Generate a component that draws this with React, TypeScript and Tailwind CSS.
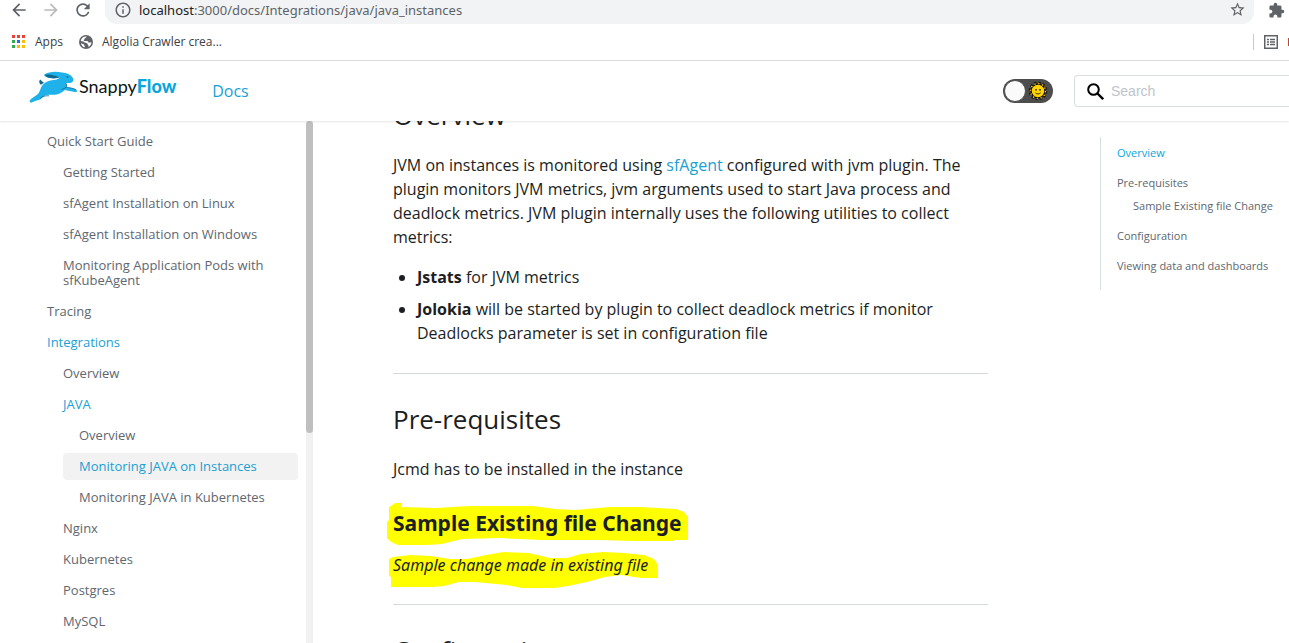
import React from "react";

type DocLink = { label: string; level: 0 | 1 | 2; state?: "open" | "current" };

const sidebarLinks: DocLink[] = [
  { label: "Quick Start Guide", level: 0 },
  { label: "Getting Started", level: 1 },
  { label: "sfAgent Installation on Linux", level: 1 },
  { label: "sfAgent Installation on Windows", level: 1 },
  { label: "Monitoring Application Pods with sfKubeAgent", level: 1 },
  { label: "Tracing", level: 0 },
  { label: "Integrations", level: 0, state: "open" },
  { label: "Overview", level: 1 },
  { label: "JAVA", level: 1, state: "open" },
  { label: "Overview", level: 2 },
  { label: "Monitoring JAVA on Instances", level: 2, state: "current" },
  { label: "Monitoring JAVA in Kubernetes", level: 2 },
  { label: "Nginx", level: 1 },
  { label: "Kubernetes", level: 1 },
  { label: "Postgres", level: 1 },
  { label: "MySQL", level: 1 },
];

function BackIcon() {
  return (
    <svg width="20" height="20" viewBox="0 0 24 24" fill="currentColor" aria-hidden="true">
      <path d="M20 11H7.83l5.59-5.59L12 4l-8 8 8 8 1.41-1.41L7.83 13H20v-2z" />
    </svg>
  );
}

function ForwardIcon() {
  return (
    <svg width="20" height="20" viewBox="0 0 24 24" fill="currentColor" aria-hidden="true">
      <path d="M12 4l-1.41 1.41L16.17 11H4v2h12.17l-5.58 5.59L12 20l8-8z" />
    </svg>
  );
}

function ReloadIcon() {
  return (
    <svg width="20" height="20" viewBox="0 0 24 24" fill="currentColor" aria-hidden="true">
      <path d="M17.65 6.35A7.958 7.958 0 0 0 12 4c-4.42 0-7.99 3.58-7.99 8s3.57 8 7.99 8c3.73 0 6.84-2.55 7.73-6h-2.08A5.99 5.99 0 0 1 12 18c-3.31 0-6-2.69-6-6s2.69-6 6-6c1.66 0 3.14.69 4.22 1.78L13 11h7V4l-2.35 2.35z" />
    </svg>
  );
}

function InfoIcon() {
  return (
    <svg width="18" height="18" viewBox="0 0 24 24" fill="currentColor" aria-hidden="true">
      <path d="M11 7h2v2h-2zm0 4h2v6h-2zm1-9C6.48 2 2 6.48 2 12s4.48 10 10 10 10-4.48 10-10S17.52 2 12 2zm0 18c-4.41 0-8-3.59-8-8s3.59-8 8-8 8 3.59 8 8-3.59 8-8 8z" />
    </svg>
  );
}

function StarIcon() {
  return (
    <svg width="17" height="17" viewBox="0 0 24 24" fill="currentColor" aria-hidden="true">
      <path d="M22 9.24l-7.19-.62L12 2 9.19 8.63 2 9.24l5.46 4.73L5.82 21 12 17.27 18.18 21l-1.63-7.03L22 9.24zM12 15.4l-3.76 2.27 1-4.28-3.32-2.88 4.38-.38L12 6.1l1.71 4.04 4.38.38-3.32 2.88 1 4.28L12 15.4z" />
    </svg>
  );
}

function PuzzleIcon() {
  return (
    <svg width="17" height="17" viewBox="0 0 24 24" fill="currentColor" aria-hidden="true">
      <path d="M20.5 11H19V7c0-1.1-.9-2-2-2h-4V3.5a2.5 2.5 0 0 0-5 0V5H4c-1.1 0-1.99.9-1.99 2v3.8H3.5c1.49 0 2.7 1.21 2.7 2.7s-1.21 2.7-2.7 2.7H2V20c0 1.1.9 2 2 2h3.8v-1.5c0-1.49 1.21-2.7 2.7-2.7s2.7 1.21 2.7 2.7V22H17c1.1 0 2-.9 2-2v-4h1.5a2.5 2.5 0 0 0 0-5z" />
    </svg>
  );
}

function AppsIcon() {
  const colors = ["#ea4335", "#ea4335", "#ea4335", "#34a853", "#1a73e8", "#fbbc04", "#34a853", "#fbbc04", "#fbbc04"];
  return (
    <svg width="14" height="14" viewBox="0 0 14 14" aria-hidden="true" shapeRendering="crispEdges">
      {colors.map((c, i) => (
        <rect key={i} x={(i % 3) * 5} y={Math.floor(i / 3) * 5} width="3" height="3" fill={c} />
      ))}
    </svg>
  );
}

function GlobeIcon() {
  return (
    <svg width="14" height="14" viewBox="0 0 14 14" aria-hidden="true">
      <circle cx="7" cy="7" r="7" fill="#5f6368" />
      <path d="M8 1.6c-1 .2-.6 1.1-1.7 1.5-.9.3-.5 1.3-1.3 1.6-.7.3-.1 1.3.8 1.3h2.4c.9 0 .6 1.2 1.4 1.4 1 .3 1.7-.2 2.8-.2 0 2-1.2 4-3 4.8.2-.9.4-1.6-.3-2.1-.7-.5-.3-1.3-1.2-1.7-.8-.3-2.3.1-2.5-.9C5.2 6.6 3.5 6.5 1.7 6 2.2 3.5 4.3 1.2 8 1.6zM2 8.2c1 .1 1.7.9 2.5 1.1.8.2.5 1 1 1.5.4.4.5 1 .4 1.5C4 12 2.200 10.300 2 8.200z" fill="#fff" />
    </svg>
  );
}

function ReadingListIcon() {
  return (
    <svg width="14" height="14" viewBox="0 0 14 14" fill="none" stroke="#5f6368" aria-hidden="true">
      <rect x=".75" y=".75" width="12.5" height="12.5" strokeWidth="1.5" />
      <path d="M3 4.5h2M6 4.5h5M3 7h2M6 7h5M3 9.5h2M6 9.5h5" strokeWidth="1.3" />
    </svg>
  );
}

function Rabbit() {
  return (
    <svg width="50" height="32" viewBox="0 0 50 32" aria-hidden="true">
      <path d="M11.500 8.500c-1.800.8-1.700 3.500.2 5.200l3.500-1.900c-1.300-.8-2.800-1.600-3.700-3.300z" fill="#12678f" />
      <path
        d="M15.300 3.500C19 .6 27 .1 33 1.400c4.500.3 9.500 2.200 11.200 6 .8 2.200-.6 4.200-3.400 4.500-1.700.2-3 .2-4.200.1 1.200 1.300 1.300 2.500.5 4 3 .8 7.500.9 10.300 3 1.400 1.100.5 2.400-1.500 2-3.500-.7-7.400-1.300-10.200-1.900-2.600 2.600-5.900 4.500-9.500 4.700-4.200.2-7.600-.6-10.300.7-2.400 1.200-3.500 3.800-6.300 4.500-2.600.7-4.400 1.300-6.200 2.300-1.600.7-3.200.2-2.700-1.200 1.200-2.800 5.300-4.500 7.600-6.500 2.800-2.300 2.900-6.500 5.100-9.400 2.700-3.400 7-4.600 11-5.100 2.800-.3 5.200-1 6.500-2.500-4.500 1.100-10.100 1.200-13.600-.6-1.200-.6-2.400-1.400-2-2.500z"
        fill="#1fb2ea"
      />
      <path d="M15.600 4.300c2.400-1.600 7.500-.9 11.400.7 1.200.5 2.300 1 3.400 1.200-4.200 1.400-11.400 1.700-14.800-1.900z" fill="#12678f" />
      <path d="M36.600 12c1.200 1.300 1.300 2.500.5 4-1.200 1.400-2.900 2.100-4.600 2.300M37.100 16.100c3 .8 7.500.9 10.200 2.900M20 24.800c-3.700-.1-6.500.2-8.800 2.600" fill="none" stroke="#12678f" strokeWidth=".8" />
      <circle cx="38.500" cy="6" r=".9" fill="#12678f" />
    </svg>
  );
}

function SunFace() {
  return (
    <svg width="20" height="20" viewBox="0 0 20 20" aria-hidden="true">
      <circle cx="10" cy="10" r="7.8" fill="none" stroke="#111" strokeWidth="3" strokeDasharray="2.3 1.784" />
      <circle cx="10" cy="10" r="6.9" fill="#ffc800" stroke="#111" strokeWidth="1.4" />
      <circle cx="10" cy="10" r="7.5" fill="none" stroke="#ffc800" strokeWidth="1.5" strokeDasharray="1.3 2.627" />
      <circle cx="10" cy="10" r="5.8" fill="#ffd400" />
      <circle cx="8" cy="8.8" r=".9" fill="#222" />
      <circle cx="12" cy="8.8" r=".9" fill="#222" />
      <path d="M7.300 11.800c1.400 1.500 4 1.500 5.400 0" fill="none" stroke="#222" strokeWidth=".9" />
    </svg>
  );
}

function SearchIcon() {
  return (
    <svg width="17" height="17" viewBox="0 0 17 17" fill="none" stroke="#000" strokeWidth="2" aria-hidden="true">
      <circle cx="6.5" cy="6.5" r="5.3" />
      <path d="M10.5 10.5l5.7 5.7" strokeWidth="2.4" />
    </svg>
  );
}

function BrowserBar() {
  return (
    <div className="shrink-0 border-b border-[#dadce0] bg-white font-['Open_Sans',sans-serif]">
      <div className="flex h-6 items-start pl-[9px] text-[#5f6368]">
        <button type="button" aria-label="Back" className="mr-3"><BackIcon /></button>
        <button type="button" aria-label="Forward" className="mr-3 text-[#bbb]"><ForwardIcon /></button>
        <button type="button" aria-label="Reload" className="mr-3"><ReloadIcon /></button>
        <div className="mr-3.5 flex h-6 grow items-start rounded-b-xl bg-[#f1f3f4] pr-2 pl-[9px]">
          <span className="mt-px"><InfoIcon /></span>
          <p className="ml-[7px] font-['Noto_Sans',sans-serif] text-[13px] leading-5">
            <span className="text-[#202124]">localhost</span>:3000/docs/Integrations/java/java_instances
          </p>
          <button type="button" aria-label="Bookmark this page" className="mt-px ml-auto"><StarIcon /></button>
        </div>
        <button type="button" aria-label="Extensions" className="mt-0.5 mr-1"><PuzzleIcon /></button>
      </div>
      <div className="flex h-9 items-center pl-3 text-xs text-[#3c4043]">
        <a href="#apps" className="mr-4 flex items-center gap-[9px]"><AppsIcon />Apps</a>
        <a href="#algolia" className="flex items-center gap-[9px]"><GlobeIcon />Algolia Crawler crea...</a>
        <div className="ml-auto flex items-center gap-[10px]">
          <span className="h-4 w-px bg-[#c6c8cb]" />
          <ReadingListIcon />
          <span className="h-2 w-px bg-[#c0452c]" />
        </div>
      </div>
    </div>
  );
}

function Navbar() {
  return (
    <header className="z-10 flex h-[60px] shrink-0 items-center bg-white pl-[29px] shadow-[0_1px_2px_0_rgba(0,0,0,0.1)]">
      <a href="#home" className="flex items-start pb-2">
        <Rabbit />
        <span className="mt-[3px] font-['Lato',sans-serif] text-lg leading-6 font-normal text-[#0c1513]">
          Snappy<b className="font-black text-[#0ba5dd]">Flow</b>
        </span>
      </a>
      <a href="#docs" className="ml-9 text-base text-[#1a9fd4]">Docs</a>
      <label className="mr-[21px] ml-auto flex h-6 w-[50px] cursor-pointer items-center justify-between rounded-full bg-[#4d4d4d] pr-[5px] pl-px">
        <input type="checkbox" aria-label="Dark mode" className="size-[22px] appearance-none rounded-full border border-[#4d4d4d] bg-[#fafafa]" />
        <SunFace />
      </label>
      <label className="flex h-8 w-[215px] items-center gap-[7px] rounded-l border border-r-0 border-[#dadde1] pl-3">
        <SearchIcon />
        <input type="search" aria-label="Search" placeholder="Search" className="w-40 font-['Liberation_Sans',sans-serif] text-sm outline-none placeholder:text-[#bfc4cb]" />
      </label>
    </header>
  );
}

function Sidebar() {
  return (
    <aside className="flex w-[313px] shrink-0 overflow-hidden">
      <nav aria-label="Docs" className="grow pt-[7px] pr-2 text-[13px] leading-[15px] text-[#606770]">
        <ul className="flex flex-col gap-1">
          {sidebarLinks.map((l, i) => (
            <li key={i} className={l.level === 0 ? "pl-[31px]" : l.level === 1 ? "pl-[47px]" : "pl-[63px]"}>
              <a
                href={"#nav-" + i}
                className={
                  "block rounded-sm py-1.5 pr-6 pl-4 " +
                  (l.state === "current" ? "bg-[#f2f2f2] text-[#1a9fd4]" : l.state === "open" ? "text-[#1a9fd4]" : "")
                }
              >
                {l.label}
              </a>
            </li>
          ))}
        </ul>
      </nav>
      <div className="w-[7px] shrink-0 bg-[#f1f1f1]">
        <div className="h-[312px] rounded-full bg-[#bfbfbf]" />
      </div>
    </aside>
  );
}

function TitleMarker() {
  return (
    <svg className="absolute -top-1.5 -left-1.5 -z-10" width="302" height="42" viewBox="387 503 302 42" aria-hidden="true">
      <path d="M391 506l4-3h6v4l35 1 34-2 63 0 22 3 20 1 35-3 30 0 36 2 8 3 4 5 0 6v17h-14l-1 1h-41l-31-1h-60l-41-2-38 1-20 5-15 1h-29l-7-3-4-4 0-16 2-2 0-13z" fill="#ffff00" />
    </svg>
  );
}

function NoteMarker() {
  return (
    <svg className="absolute -top-px -left-1 -z-10" width="272" height="36" viewBox="389 552 272 36" aria-hidden="true">
      <path d="M389 559l4-2 17-2 21 1 19 3 17 0 19-4 18-3 25 1 21 5 17 0 14-4 22-2 21 1 20 2 10 4 4 6v13h-17l-20-3-16 2-18 5-19 4-20 3h-21l-20-4-32-3-16 0-15 4-11 1h-42l0-10-3-2z" fill="#ffff00" />
    </svg>
  );
}

function Article() {
  return (
    <article className="w-full max-w-[595px] text-[#1c1e21]">
      <h2 className="-mt-6 text-[26px] leading-9">Overview</h2>
      <p className="mt-5 text-base">
        JVM on instances is monitored using <a href="#sfagent" className="text-[#1a9fd4]">sfAgent</a> configured with jvm plugin. The
        plugin monitors JVM metrics, jvm arguments used to start Java process and deadlock metrics. JVM plugin internally uses
        the following utilities to collect metrics:
      </p>
      <ul className="mt-4 flex list-disc flex-col gap-2 pl-6 text-base">
        <li><strong>Jstats</strong> for JVM metrics</li>
        <li><strong>Jolokia</strong> will be started by plugin to collect deadlock metrics if monitor Deadlocks parameter is set in configuration file</li>
      </ul>
      <hr className="mt-7 border-[#d5d9d9]" />
      <h2 className="mt-[27px] text-[26px] leading-9">Pre-requisites</h2>
      <p className="mt-5 text-base">Jcmd has to be installed in the instance</p>
      <h3 className="relative isolate mt-7 w-fit font-['Noto_Sans',sans-serif] text-[21px] leading-7 font-bold"><TitleMarker />Sample Existing file Change</h3>
      <p className="relative isolate mt-4 w-fit font-['Noto_Sans',sans-serif] text-base"><NoteMarker /><em>Sample change made in existing file</em></p>
      <hr className="mt-[27px] border-[#d5d9d9]" />
      <h2 className="mt-[27px] text-[26px] leading-9">Configuration</h2>
    </article>
  );
}

function Contents() {
  return (
    <nav aria-label="On this page" className="mt-4 h-[153px] w-[189px] shrink-0 border-l border-[#dadde1] pt-2 pl-4 text-[11px] leading-4 text-[#606770]">
      <ul className="flex flex-col gap-3.5 whitespace-nowrap">
        <li><a href="#overview" className="text-[#0aa6dd]">Overview</a></li>
        <li>
          <a href="#prereq">Pre-requisites</a>
          <ul className="mt-[7px] pl-4"><li><a href="#sample">Sample Existing file Change</a></li></ul>
        </li>
        <li><a href="#config">Configuration</a></li>
        <li><a href="#data">Viewing data and dashboards</a></li>
      </ul>
    </nav>
  );
}

export default function App() {
  return (
    <div className="flex h-screen flex-col overflow-hidden bg-white font-['Open_Sans',sans-serif]">
      <BrowserBar />
      <Navbar />
      <div className="flex min-h-0 grow overflow-hidden">
        <Sidebar />
        <main className="flex min-w-0 grow justify-between pl-20">
          <Article />
          <Contents />
        </main>
      </div>
    </div>
  );
}
